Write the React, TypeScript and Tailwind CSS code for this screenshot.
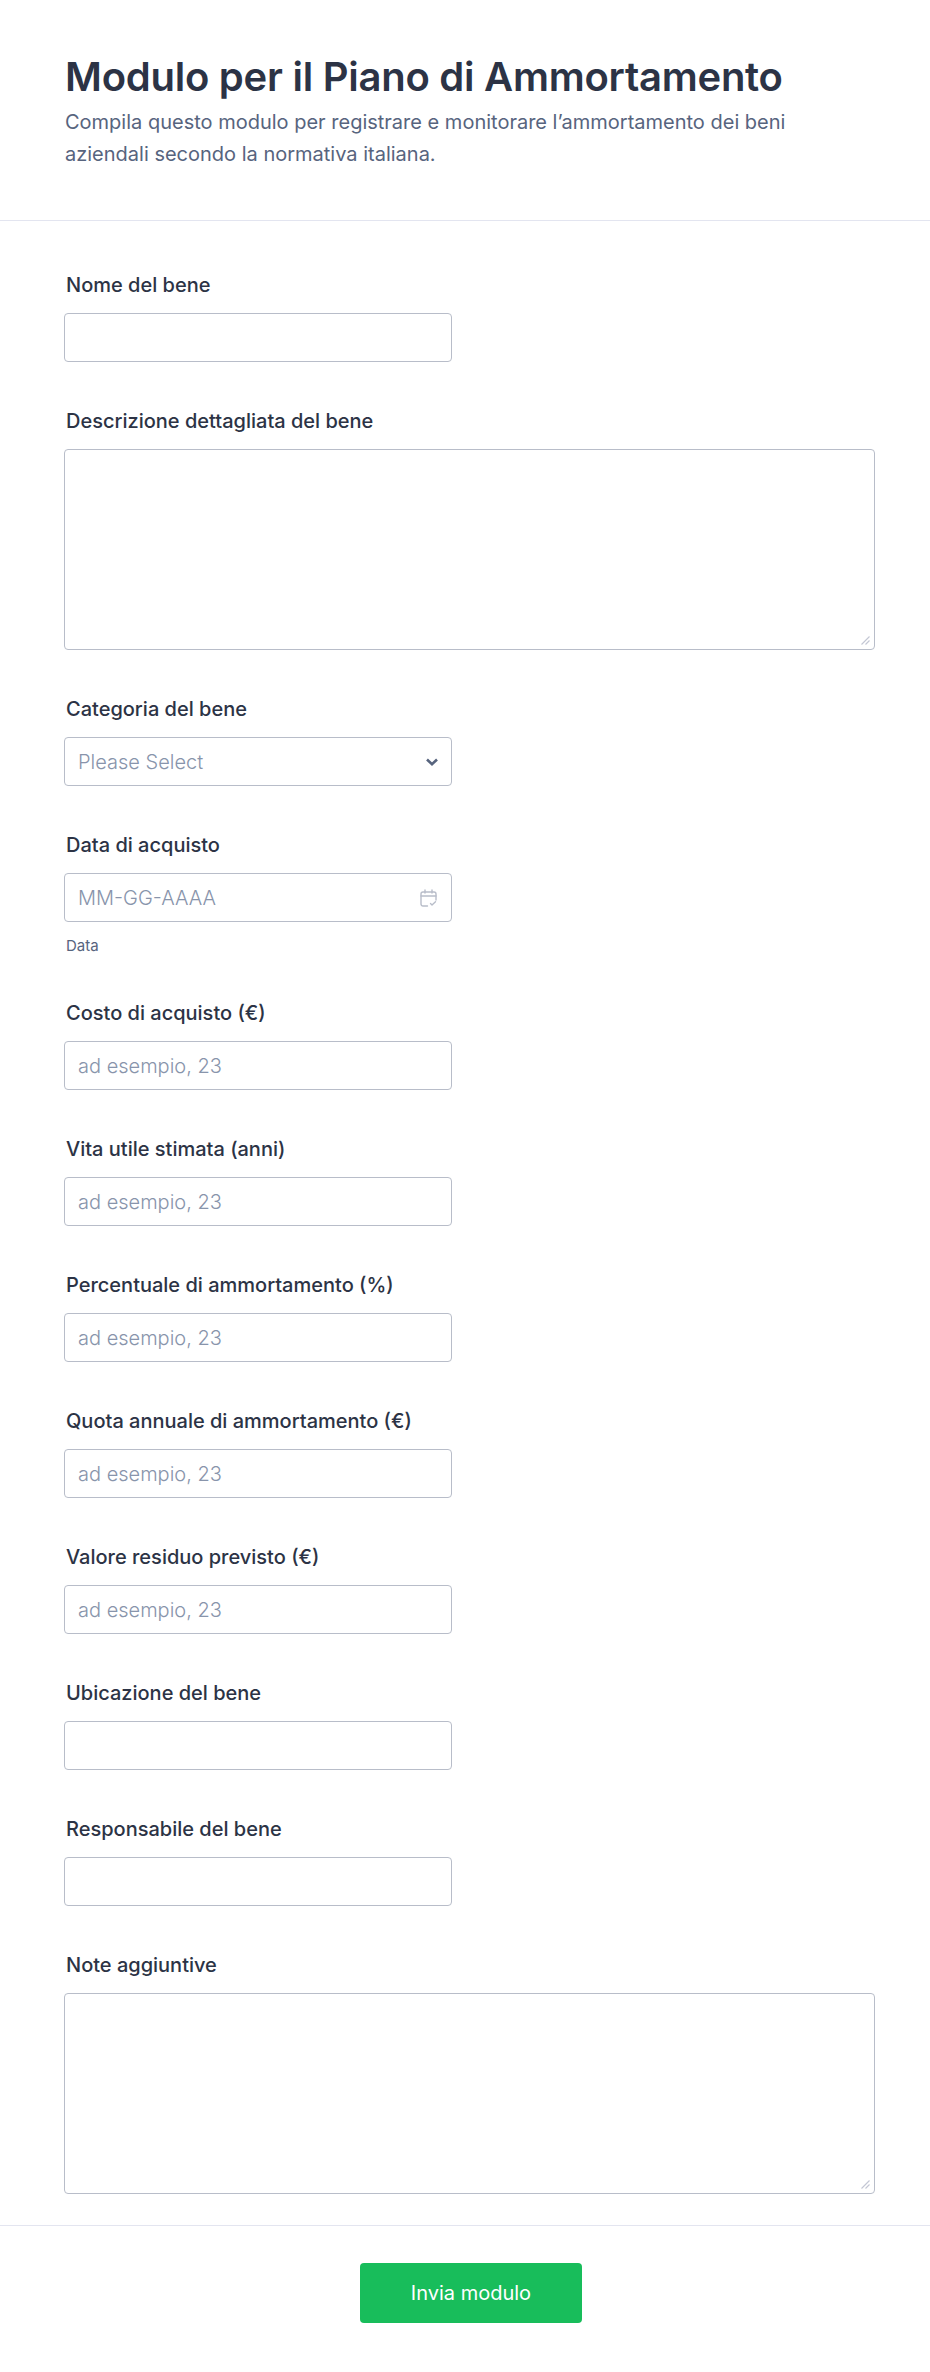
const inputClass =
  "block w-[388px] h-[49px] rounded-[4px] border border-[#b8bdc9] bg-white px-[13px] text-[20px] font-light text-[#2c3345] placeholder:text-[#8894ab] outline-none";

function Label({ text }: { text: string }) {
  return (
    <label className="block h-[24px] mb-[16px] pl-[2px] text-[20px] leading-[24px] font-medium text-[#2c3345]">
      {text}
    </label>
  );
}

function TextField({ label, placeholder }: { label: string; placeholder?: string }) {
  return (
    <div className="mb-[47px]">
      <Label text={label} />
      <input type="text" placeholder={placeholder} className={inputClass} />
    </div>
  );
}

function TextAreaField({ label, last }: { label: string; last?: boolean }) {
  return (
    <div className={last ? "" : "mb-[47px]"}>
      <Label text={label} />
      <div className="relative w-[811px]">
        <textarea className="block w-full h-[201px] rounded-[4px] border border-[#b8bdc9] bg-white p-[13px] text-[20px] outline-none resize-none" />
        {/* grab handle, lighter than the browser's own */}
        <svg
          viewBox="0 0 9 9"
          className="absolute right-[5px] bottom-[5px] w-[9px] h-[9px] text-[#c3c7d4]"
          fill="none"
          stroke="currentColor"
          strokeWidth="1.1"
        >
          <path d="M0.5 8.5 8.5 0.5M4.5 8.5 8.5 4.5" />
        </svg>
      </div>
    </div>
  );
}

const numberFields = [
  "Costo di acquisto (€)",
  "Vita utile stimata (anni)",
  "Percentuale di ammortamento (%)",
  "Quota annuale di ammortamento (€)",
  "Valore residuo previsto (€)",
];

export default function App() {
  return (
    <div className="w-[930px] h-[2372px] overflow-hidden bg-white font-['Inter',sans-serif]">
      <header className="h-[221px] border-b border-[#e3e5f0] pt-[52px] px-[65px]">
        <h1 className="text-[40px] leading-[50px] tracking-[-0.25px] font-semibold text-[#2c3345]">
          Modulo per il Piano di Ammortamento
        </h1>
        <p className="mt-[4px] w-[780px] text-[20px] leading-[32px] text-[#57647e]">
          Compila questo modulo per registrare e monitorare l’ammortamento dei beni aziendali
          secondo la normativa italiana.
        </p>
      </header>

      <main className="px-[64px] pt-[52px] pb-[31px]">
        <TextField label="Nome del bene" />
        <TextAreaField label="Descrizione dettagliata del bene" />

        <div className="mb-[47px]">
          <Label text="Categoria del bene" />
          <div className="relative w-[388px]">
            <select
              defaultValue=""
              className="block w-full h-[49px] appearance-none rounded-[4px] border border-[#b8bdc9] bg-white px-[13px] text-[20px] font-light text-[#8894ab] outline-none"
            >
              <option value="">Please Select</option>
            </select>
            <svg
              viewBox="0 0 12 8"
              className="absolute right-[14px] top-[21px] w-[12px] h-[8px] text-[#57647e]"
              fill="none"
              stroke="currentColor"
              strokeWidth="2.6"
            >
              <path d="M1 1.5 6 6.2 11 1.5" />
            </svg>
          </div>
        </div>

        <div className="mb-[47px]">
          <Label text="Data di acquisto" />
          <div className="relative w-[388px]">
            <input type="text" placeholder="MM-GG-AAAA" className={inputClass} />
            <svg
              viewBox="0 0 17 18"
              className="absolute right-[15px] top-[16px] w-[17px] h-[18px] text-[#b8bdc9]"
              fill="none"
              stroke="currentColor"
              strokeWidth="1.4"
              strokeLinecap="round"
              strokeLinejoin="round"
            >
              <path d="M7.5 17H3A2 2 0 0 1 1 15V5A2 2 0 0 1 3 3H14A2 2 0 0 1 16 5V11" />
              <path d="M1 7H16M5 1V4M12 1V4" />
              <path d="M10.5 14.5 12 16 15.5 12.8" />
            </svg>
          </div>
          <div className="mt-[15px] h-[17px] pl-[2px] text-[15px] leading-[17px] text-[#57647e]">Data</div>
        </div>

        {numberFields.map((f) => (
          <TextField key={f} label={f} placeholder="ad esempio, 23" />
        ))}
        <TextField label="Ubicazione del bene" />
        <TextField label="Responsabile del bene" />
        <TextAreaField label="Note aggiuntive" last />
      </main>

      <footer className="border-t border-[#e3e5f0] pt-[37px] pl-[12px] flex justify-center">
        <button className="w-[222px] h-[60px] rounded-[4px] bg-[#18bd5b] text-[20px] font-normal text-white">
          Invia modulo
        </button>
      </footer>
    </div>
  );
}
